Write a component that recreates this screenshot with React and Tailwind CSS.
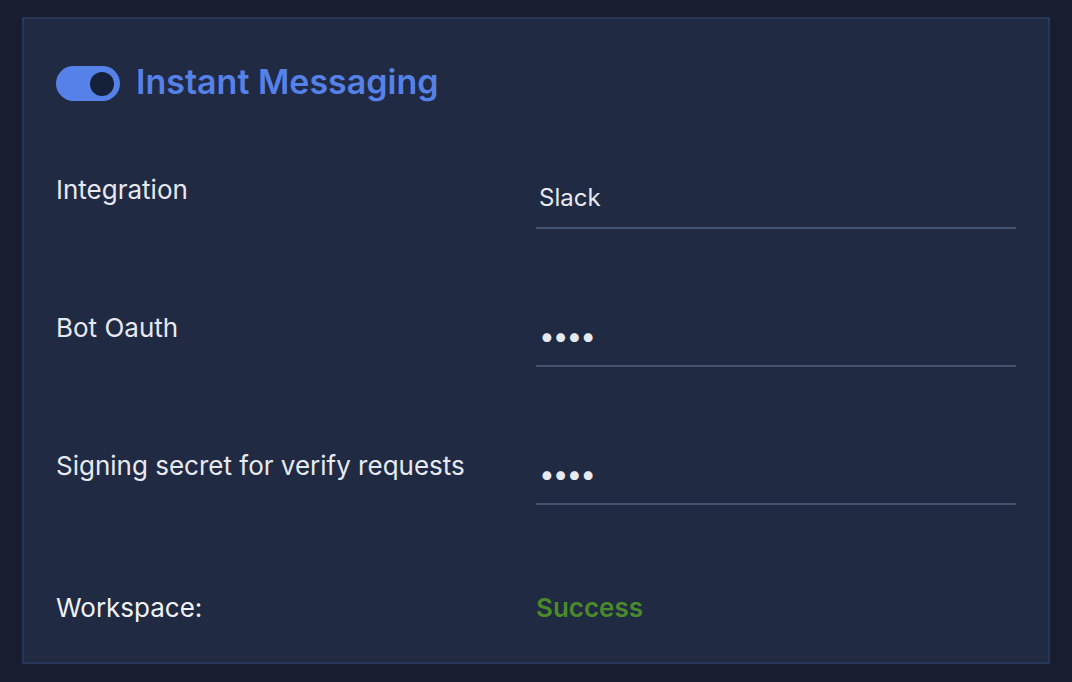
const FIELDS = [
  { label: 'Integration', value: 'Slack' },
  { label: 'Bot Oauth', value: '••••', secret: true },
  { label: 'Signing secret for verify requests', value: '••••', secret: true },
];

const Toggle = ({ on = true }) => (
  <div className={`w-16 h-[35px] rounded-full flex items-center px-[6px] ${on ? 'bg-[#5581e9] justify-end' : 'bg-gray-500 justify-start'}`}>
    <div className="w-6 h-6 rounded-full bg-[#152039]" />
  </div>
);

const FieldRow = ({ label, value, secret }) => (
  <div className="grid grid-cols-2 h-[138px]">
    <div className="text-[26px] leading-[28px] text-[#e6e9f0]">{label}</div>
    <div>
      <div className={`h-[53px] border-b-2 border-[#46536f] flex items-end pb-[15px] pl-[3px] text-[#e6e9f0] leading-[28px] ${secret ? 'text-[28px] tracking-[-2px]' : 'text-[24px]'}`}>
        {value}
      </div>
    </div>
  </div>
);

export default function App() {
  return (
    <div className="min-h-[682px] bg-[#181e30] pt-[17px] px-[22px] pb-[18px] font-['Inter','Liberation_Sans',sans-serif]">
      <div className="h-[647px] border-2 border-[#28365a] bg-[#212a43] px-[32px] pt-[47px]">
        <div className="flex items-center gap-4">
          <Toggle />
          <h1 className="text-[34px] font-semibold text-[#5581e9] leading-none -mt-[3px]">Instant Messaging</h1>
        </div>
        <div className="mt-[75px]">
          {FIELDS.map((f) => (
            <FieldRow key={f.label} {...f} />
          ))}
        </div>
        <div className="grid grid-cols-2 mt-[4px] text-[26px] leading-[28px]">
          <div className="text-[#f0f2f6]">Workspace:</div>
          <div className="text-[#4a8a2a] font-semibold">Success</div>
        </div>
      </div>
    </div>
  );
}
